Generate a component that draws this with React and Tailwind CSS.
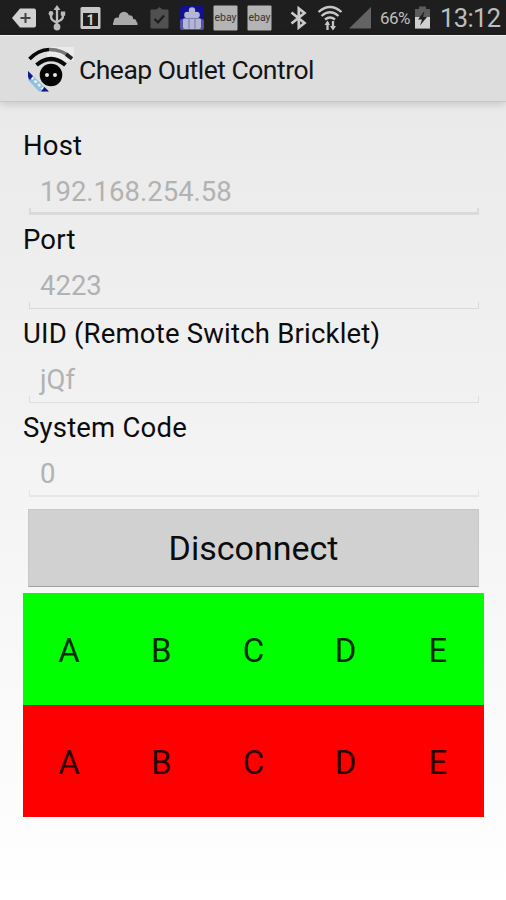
const FIELDS = [
  { label: "Host", value: "192.168.254.58", line: "border-[#dadada]", bar: "border-x-2 border-b-[3px]" },
  { label: "Port", value: "4223", line: "border-[#d9d9d9]", bar: "border-x border-b" },
  { label: "UID (Remote Switch Bricklet)", value: "jQf", line: "border-[#dedede]", bar: "border-x border-b" },
  { label: "System Code", value: "0", line: "border-[#e6e6e6]", bar: "border-x border-b-2" },
];

const OUTLETS = ["A", "B", "C", "D", "E"];

const EbayIcon = ({ className }) => (
  <svg className={className} width="25" height="26" viewBox="0 0 25 26">
    <rect x="0.5" y="0.5" width="24" height="25" rx="1" fill="#b4b4b4" />
    <text x="12.5" y="15.5" textAnchor="middle" fontSize="10" textLength="22" lengthAdjust="spacingAndGlyphs" fill="#333">
      ebay
    </text>
  </svg>
);

const StatusBar = () => (
  <div className="flex items-center h-[35px] bg-[#1e1e1e] text-[#bebebe] shrink-0">
    {/* Keyboard / add */}
    <svg className="ml-[11px]" width="26" height="22" viewBox="0 0 26 22">
      <path d="M9 1.5H23Q25 1.5 25 3.500V18.500Q25 20.500 23 20.500H9L1 11Z" fill="#d2d2d2" />
      <path d="M14.500 6V16M9.500 11H19.500" stroke="#444" strokeWidth="2" />
    </svg>

    {/* USB */}
    <svg className="ml-[11px]" width="18" height="26" viewBox="0 0 18 26" fill="none" stroke="#bcbcbc" strokeWidth="2.300">
      <path d="M9 3V22M3 8V11.500Q3 14.500 6 16L9 18M15 8V11Q15 14 12 15.500L9 17" />
      <path d="M9 0L12.500 5H5.500Z" fill="#bcbcbc" stroke="none" />
      <circle cx="3" cy="8.500" r="2.400" fill="#bcbcbc" stroke="none" />
      <rect x="12.800" y="6.500" width="4.400" height="4.200" fill="#bcbcbc" stroke="none" />
      <circle cx="9" cy="22" r="3.400" fill="#bcbcbc" stroke="none" />
    </svg>

    {/* Calendar */}
    <svg className="ml-[14px]" width="21" height="24" viewBox="0 0 21 24">
      <rect x="0.500" y="1" width="20" height="22" rx="1.500" fill="#c8c8c8" />
      <rect x="3" y="7" width="15" height="13" fill="#1e1e1e" />
      <text x="10.500" y="18.500" textAnchor="middle" fontSize="14" fontWeight="700" fill="#d0d0d0">1</text>
    </svg>

    {/* Cloud */}
    <svg className="ml-[11px]" width="26" height="18" viewBox="0 0 26 18" fill="#aaa">
      <circle cx="12" cy="8" r="5.200" />
      <circle cx="5.500" cy="12.300" r="3.700" />
      <circle cx="17.500" cy="9.800" r="3.600" />
      <circle cx="21.500" cy="13" r="3" />
      <path d="M3 11L12 8L22 11L25.500 14V16H1V14Z" />
    </svg>

    {/* Clipboard */}
    <svg className="ml-[12px]" width="19" height="22" viewBox="0 0 19 22">
      <rect x="0.500" y="2.500" width="18" height="19" rx="1" fill="#505050" />
      <path d="M6 3L9.500 0L13 3V5H6Z" fill="#505050" />
      <path d="M4.500 12L8 15.500L14 8.500" fill="none" stroke="#1c1c1c" strokeWidth="2.200" />
    </svg>

    {/* Gift */}
    <svg className="ml-[11px]" width="25" height="26" viewBox="0 0 25 26">
      <rect x="0" y="1" width="24" height="24" rx="2" fill="#12128e" />
      <rect x="0" y="14" width="24" height="11" rx="2" fill="#54549e" />
      <g fill="#b5b5d6">
        <rect x="3" y="13" width="18" height="11" rx="2" />
        <circle cx="7.500" cy="10" r="3.300" />
        <circle cx="16.500" cy="10" r="3.300" />
        <circle cx="12" cy="5.500" r="3.200" />
        <rect x="9" y="7" width="6" height="8" />
      </g>
      <path d="M9 14V24M15 14V24M4 13.500H20" stroke="#7c7cb2" strokeWidth="1.100" />
    </svg>

    <EbayIcon className="ml-[8px]" />
    <EbayIcon className="ml-[9px]" />

    {/* Bluetooth */}
    <svg className="ml-[18px]" width="18" height="24" viewBox="0 0 18 24" fill="none" stroke="#cacaca" strokeWidth="2.700">
      <path d="M1.500 6.500L14.500 17L8.800 21.500V2.500L14.500 7L1.500 17.500" />
    </svg>

    {/* Wifi with traffic arrows */}
    <svg className="ml-[9px]" width="26" height="26" viewBox="0 0 26 26" fill="none" stroke="#c6c6c6" strokeWidth="2.300">
      <path d="M1.500 7Q13 -3 24.500 7M4.500 11Q13 3.500 21.500 11M8 14.500Q13 10.500 18 14.500" />
      <path d="M10.500 17V25M16 16V24" />
      <path d="M7.500 20L10.500 15.500L13 20ZM13 21L16 25.500L19 21Z" fill="#c6c6c6" stroke="none" />
    </svg>

    {/* Signal */}
    <svg className="ml-[6px]" width="23" height="22" viewBox="0 0 23 22">
      <path d="M0 21.500L22 0V21.500Z" fill="#636363" />
    </svg>

    <span className="ml-[8px] mt-[2px] w-[32px] text-[17px] leading-none tracking-[-0.6px]">66%</span>

    {/* Battery */}
    <svg className="ml-[2px]" width="17" height="23" viewBox="0 0 17 23">
      <path d="M5 0.500H12V3H16V22.500H1V3H5Z" fill="#5c5c5c" />
      <path d="M1 11H16V22.500H1Z" fill="#d0d0d0" />
      <path d="M10.500 5L4 13.500H8L6 19.500L13 11H9Z" fill="#1e1e1e" />
    </svg>

    <span className="ml-[9px] mt-[2px] text-[25.5px] leading-none tracking-[-0.6px]">13:12</span>
  </div>
);

const AppIcon = () => (
  <svg className="ml-[27px] mt-[2px] shrink-0" width="48" height="48" viewBox="0 0 48 48">
    <rect x="20" y="1" width="27" height="14" fill="#ebebeb" />
    <path d="M2.500 13Q11 4 22 3.500" fill="none" stroke="#0a0a0a" strokeWidth="3.600" />
    <path d="M22 3.500Q36 3.500 45 12.500" fill="none" stroke="#777" strokeWidth="3.600" />
    <path d="M39 8.200L45 12.800" fill="none" stroke="#222" strokeWidth="3.600" />
    <path d="M9.500 19Q24 7 38.500 19" fill="none" stroke="#0a0a0a" strokeWidth="4.200" />
    <circle cx="24" cy="29" r="11.300" fill="#050505" />
    <circle cx="20" cy="29" r="2" fill="#e4e4e4" />
    <circle cx="28" cy="29" r="2" fill="#e4e4e4" />
    <path d="M1 25L21 44.500V45.500H12L1 34Z" fill="#8fc1dc" />
    <path d="M4 31L16 43" stroke="#e4f3fb" strokeWidth="2.500" strokeDasharray="3 2" />
    <path d="M1 25L6 30L3 34L1 31ZM14 45.500L17.500 41L22 45.500Z" fill="#15158c" />
  </svg>
);

const Field = ({ label, value, line, bar }) => (
  <div className="h-[94px]">
    <p className="h-8 text-[27.5px] leading-8 tracking-[0.2px] text-[#0c0c0c]">{label}</p>
    <div className="ml-[6px] mr-[5px] h-[53px] flex flex-col justify-end">
      <p className="pl-[11px] text-[27.5px] leading-8 text-[#b2b2b2]">{value}</p>
      <div className={`h-[7px] ${line} ${bar}`} />
    </div>
  </div>
);

const OutletRow = ({ color }) => (
  <div className={`grid grid-cols-5 ${color}`}>
    {OUTLETS.map((name) => (
      <button key={name} className="pt-[2px] text-[33px] leading-none text-black/85 text-center">
        {name}
      </button>
    ))}
  </div>
);

const App = () => {
  return (
    <div className="flex flex-col w-[506px] h-[900px] overflow-hidden bg-linear-to-b from-[#e7e7e7] to-white font-['Roboto',sans-serif]">
      <StatusBar />

      {/* Action bar */}
      <header className="flex items-center h-[67px] shrink-0 bg-[#dddddd] border-t border-t-[#f0f0f0] border-b border-b-[#c8c8c8] shadow-[0_2px_8px_rgba(0,0,0,0.16)]">
        <AppIcon />
        <h1 className="ml-[4px] mt-[3px] text-[26.5px] leading-none tracking-[-0.5px] text-[#141414]">Cheap Outlet Control</h1>
      </header>

      <main className="flex flex-col pt-[28px] pl-[23px] pr-[22px]">
        {FIELDS.map((field) => (
          <Field key={field.label} {...field} />
        ))}

        <button className="ml-[5px] mr-[5px] mt-[3px] h-[78px] bg-[#d1d1d1] border border-[#c8c8c8] border-b-[#a0a0a0] text-[34px] leading-none text-[#0c0c0c]">
          Disconnect
        </button>

        <div className="mt-[6px] grid grid-rows-[112px_112px]">
          <OutletRow color="bg-[#00ff00]" />
          <OutletRow color="bg-[#ff0000]" />
        </div>
      </main>
    </div>
  );
};

export default App;
